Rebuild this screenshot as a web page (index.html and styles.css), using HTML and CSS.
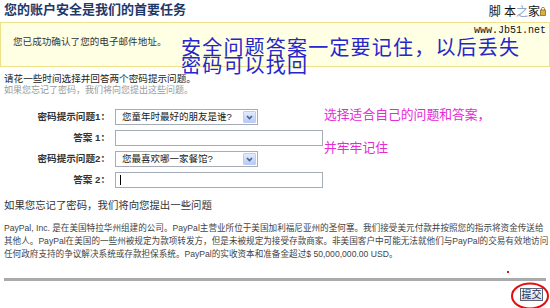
FILE: index.html
```html
<!DOCTYPE html>
<html lang="zh-CN">
<head>
  <meta charset="UTF-8">
  <meta name="viewport" content="width=device-width, initial-scale=1.0">
  <title>您的账户安全是我们的首要任务</title>
  <link rel="stylesheet" href="styles.css">
</head>
<body>
  <div class="page">
    <h1 class="title">您的账户安全是我们的首要任务</h1>

    <div class="notice">您已成功确认了您的电子邮件地址。</div>

    <p class="intro">请花一些时间选择并回答两个密码提示问题。</p>
    <p class="hint">如果您忘记了密码，我们将向您提出这些问题。</p>

    <div class="form">
      <label>密码提示问题1：</label>
      <div class="select">
        <span class="value">您童年时最好的朋友是谁?</span>
        <span class="arrow"><svg width="11" height="12" viewBox="0 0 11 12"><path d="M3 5 L5.5 7.5 L8 5" fill="none" stroke="#4b5f86" stroke-width="1.6"/></svg></span>
      </div>
      <label>答案 1：</label>
      <div class="input"></div>
      <label>密码提示问题2：</label>
      <div class="select">
        <span class="value">您最喜欢哪一家餐馆?</span>
        <span class="arrow"><svg width="11" height="12" viewBox="0 0 11 12"><path d="M3 5 L5.5 7.5 L8 5" fill="none" stroke="#4b5f86" stroke-width="1.6"/></svg></span>
      </div>
      <label>答案 2：</label>
      <div class="input"><span class="caret"></span></div>
    </div>

    <p class="recall">如果您忘记了密码，我们将向您提出一些问题</p>

    <p class="legal">PayPal, Inc. 是在美国特拉华州组建的公司。PayPal主营业所位于美国加利福尼亚州的圣何塞。我们接受美元付款并按照您的指示将资金传送给<br>其他人。PayPal在美国的一些州被规定为款项转发方，但是未被规定为接受存款商家。非美国客户中可能无法就他们与PayPal的交易有效地访问<br>任何政府支持的争议解决系统或存款担保系统。PayPal的实收资本和准备金超过$ 50,000,000.00 USD。</p>

    <hr class="rule">
    <div class="actions"><button class="submit">提交</button></div>

    <!-- annotations drawn over the page -->
    <div class="note-blue">安全问题答案一定要记住，以后丢失<br>密码可以找回</div>
    <div class="note-pink note-pink-1">选择适合自己的问题和答案，</div>
    <div class="note-pink note-pink-2">并牢牢记住</div>
    <div class="watermark">
      <div class="wm-name">脚 本<span class="wm-zhi">之</span>家<svg width="6" height="9" viewBox="0 0 6 9"><rect x="0.5" y="3" width="5" height="5.5" fill="#d8b04a" stroke="#8a6a20" stroke-width="0.8"/><path d="M1.5 3 V1.8 A1.5 1.5 0 0 1 4.5 1.8 V3" fill="none" stroke="#8a6a20" stroke-width="0.8"/></svg></div>
      <div class="wm-url">www.Jb51.net</div>
    </div>
    <span class="dot"></span>
    <svg class="ring" width="40" height="28" viewBox="0 0 40 28"><ellipse cx="20" cy="14" rx="18" ry="12.5" fill="none" stroke="#e01010" stroke-width="2"/></svg>
  </div>
</body>
</html>
```

FILE: styles.css
```css
* {
  box-sizing: border-box;
}

body {
  margin: 0;
  background: #fff;
  font-family: "Liberation Sans", "Noto Sans CJK SC", sans-serif;
  color: #333;
}

.page {
  position: relative;
  width: 550px;
  height: 308px;
  overflow: hidden;
}

.title {
  margin: 0;
  height: 22px;
  padding: 2px 0 0 4px;
  font-size: 13px;
  line-height: 16px;
  font-weight: bold;
  color: #1e3868;
}

.notice {
  height: 45px;
  padding: 12px 12px 0;
  background: #ffffe3;
  border: 1px solid #efe08a;
  font-size: 9.6px;
  line-height: 14px;
  color: #333;
}

.intro {
  margin: 5px 0 0;
  padding-left: 4px;
  font-size: 9.6px;
  line-height: 13px;
  color: #222;
}

.hint {
  margin: 0;
  padding-left: 4px;
  font-size: 9px;
  line-height: 11px;
  color: #999;
}

.form {
  display: grid;
  grid-template-columns: 110px auto;
  column-gap: 5px;
  row-gap: 5px;
  justify-content: start;
  justify-items: start;
  align-items: center;
  margin-top: 13px;
}

.form label {
  justify-self: end;
  font-size: 9.6px;
  line-height: 16px;
  font-weight: bold;
  color: #333;
}

.select {
  display: flex;
  align-items: stretch;
  width: 143px;
  height: 16px;
  padding: 1px;
  background: #fff;
  border: 1px solid #a5acb5;
}

.select .value {
  flex: 1;
  padding-left: 5px;
  font-size: 9.5px;
  line-height: 12px;
  color: #222;
  white-space: nowrap;
}

.arrow {
  display: flex;
  align-items: center;
  justify-content: center;
  width: 13px;
  background: linear-gradient(#e3ebff, #b9cbf6);
  border: 1px solid #bccdf5;
  border-radius: 1px;
}

.input {
  width: 208px;
  height: 16px;
  padding: 2px 4px;
  background: #fff;
  border: 1px solid #a5acb5;
}

.caret {
  display: block;
  width: 1px;
  height: 10px;
  background: #000;
}

.recall {
  margin: 11px 0 0;
  padding-left: 4px;
  white-space: nowrap;
  font-size: 10.4px;
  line-height: 14px;
  color: #333;
}

.legal {
  margin: 9px 0 0;
  padding-left: 4px;
  font-size: 8.6px;
  line-height: 13px;
  color: #444;
  white-space: nowrap;
}

.rule {
  height: 3px;
  margin: 17px 4px 0;
  border: 0;
  background: #aaa;
}

.actions {
  display: flex;
  justify-content: flex-end;
  padding: 7px 7px 0 0;
}

.submit {
  width: 23px;
  height: 13px;
  padding: 0;
  font-family: inherit;
  font-size: 10px;
  line-height: 11px;
  color: #1a2a5a;
  background: linear-gradient(#ffffff, #dcdcdc);
  border: 1px solid #5c6477;
}

/* annotations */
.note-blue {
  position: absolute;
  left: 181px;
  top: 39px;
  font-size: 20px;
  letter-spacing: 1.2px;
  line-height: 18px;
  color: #2626cc;
  white-space: nowrap;
}

.note-pink {
  position: absolute;
  left: 324px;
  font-size: 12.8px;
  line-height: 14px;
  color: #e52ad6;
  white-space: nowrap;
}

.note-pink-1 {
  top: 108px;
}

.note-pink-2 {
  top: 141px;
}

.watermark {
  position: absolute;
  right: 4px;
  top: 4px;
  text-align: right;
}

.wm-name {
  font-size: 12px;
  line-height: 16px;
  color: #111;
}

.wm-zhi {
  color: #8fa4c6;
}

.wm-url {
  margin-top: 5px;
  font-family: "Liberation Mono", monospace;
  font-size: 10px;
  line-height: 11px;
  color: #111;
}

.dot {
  position: absolute;
  left: 507px;
  top: 271px;
  width: 2px;
  height: 2px;
  background: #e01010;
}

.ring {
  position: absolute;
  left: 510px;
  top: 282px;
}
```
